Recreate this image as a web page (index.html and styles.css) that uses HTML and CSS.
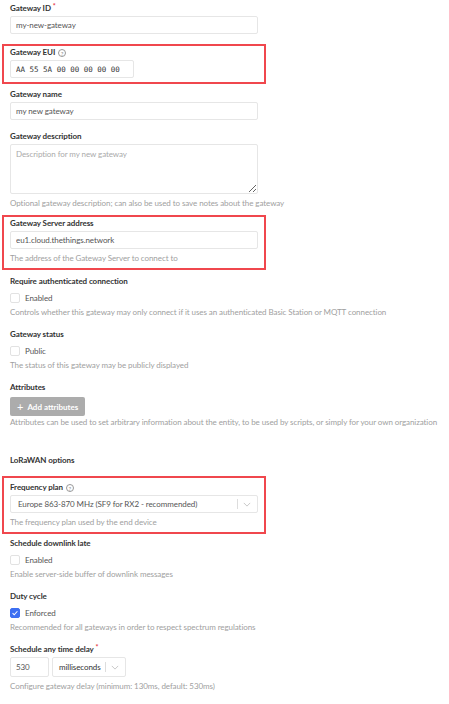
FILE: index.html
```html
<!DOCTYPE html>
<html lang="en">
<head>
    <meta charset="UTF-8">
    <meta name="viewport" content="width=device-width, initial-scale=1.0">
    <title>Add gateway</title>
    <link rel="stylesheet" href="styles.css">
</head>
<body>
    <form class="gateway-form">
        <div class="field">
            <label>Gateway ID <span class="req">*</span></label>
            <input class="text-input" type="text" value="my-new-gateway">
        </div>

        <div class="field highlight hl-top">
            <label>Gateway EUI <span class="help">?</span></label>
            <input class="text-input eui-input" type="text" value="AA 55 5A 00 00 00 00 00">
        </div>

        <div class="field">
            <label>Gateway name</label>
            <input class="text-input" type="text" value="my new gateway">
        </div>

        <div class="field">
            <label>Gateway description</label>
            <textarea class="text-input text-area" placeholder="Description for my new gateway"></textarea>
            <div class="hint">Optional gateway description; can also be used to save notes about the gateway</div>
        </div>

        <div class="field highlight">
            <label>Gateway Server address</label>
            <input class="text-input" type="text" value="eu1.cloud.thethings.network">
            <div class="hint">The address of the Gateway Server to connect to</div>
        </div>

        <div class="field">
            <label>Require authenticated connection</label>
            <div class="check-row"><span class="box"></span>Enabled</div>
            <div class="hint">Controls whether this gateway may only connect if it uses an authenticated Basic Station or MQTT connection</div>
        </div>

        <div class="field">
            <label>Gateway status</label>
            <div class="check-row"><span class="box"></span>Public</div>
            <div class="hint">The status of this gateway may be publicly displayed</div>
        </div>

        <div class="field">
            <label>Attributes</label>
            <button type="button" class="add-btn"><span class="plus">+</span>Add attributes</button>
            <div class="hint">Attributes can be used to set arbitrary information about the entity, to be used by scripts, or simply for your own organization</div>
        </div>

        <h4 class="section-title">LoRaWAN options</h4>

        <div class="field highlight hl-freq">
            <label>Frequency plan <span class="help">?</span></label>
            <div class="select wide">
                <span class="select-value">Europe 863-870 MHz (SF9 for RX2 - recommended)</span>
                <span class="select-sep"></span>
                <svg class="chevron" viewBox="0 0 10 6" width="8" height="5"><path d="M1 1l4 4 4-4" fill="none" stroke="#bbb" stroke-width="1"/></svg>
            </div>
            <div class="hint">The frequency plan used by the end device</div>
        </div>

        <div class="field">
            <label>Schedule downlink late</label>
            <div class="check-row"><span class="box"></span>Enabled</div>
            <div class="hint">Enable server-side buffer of downlink messages</div>
        </div>

        <div class="field">
            <label>Duty cycle</label>
            <div class="check-row">
                <span class="box checked">
                    <svg viewBox="0 0 10 10" width="8" height="8"><path d="M2 5.2l2 2 4-4.4" fill="none" stroke="#fff" stroke-width="1.3"/></svg>
                </span>Enforced
            </div>
            <div class="hint">Recommended for all gateways in order to respect spectrum regulations</div>
        </div>

        <div class="field">
            <label>Schedule any time delay <span class="req">*</span></label>
            <div class="delay-row">
                <input class="text-input delay-input" type="text" value="530">
                <div class="select unit">
                    <span class="select-value dark">milliseconds</span>
                    <span class="select-sep"></span>
                    <svg class="chevron" viewBox="0 0 10 6" width="8" height="5"><path d="M1 1l4 4 4-4" fill="none" stroke="#bbb" stroke-width="1"/></svg>
                </div>
            </div>
            <div class="hint">Configure gateway delay (minimum: 130ms, default: 530ms)</div>
        </div>
    </form>
</body>
</html>
```

FILE: styles.css
```css
/* Global Styles */
body {
    font-family: 'Lato', 'Open Sans', sans-serif;
    font-size: 8px;
    letter-spacing: -0.08px;
    margin: 0;
    padding: 2px 0 0 10px;
    background: #fff;
    color: #333;
}

.gateway-form {
    width: 248px;
}

.field {
    margin-bottom: 10px;
}

.field label {
    display: block;
    font-weight: bold;
    line-height: 12px;
    margin-bottom: 2px;
    color: #333;
}

.req {
    color: #e4343a;
    font-size: 7px;
    vertical-align: top;
    line-height: 9px;
}

.help {
    display: inline-block;
    width: 8px;
    height: 8px;
    border: 1px solid #999;
    border-radius: 50%;
    font-size: 6px;
    line-height: 7px;
    text-align: center;
    color: #888;
    font-weight: normal;
    vertical-align: -1px;
    box-sizing: border-box;
    margin-left: 1px;
    letter-spacing: 0;
}

/* Red annotation boxes */
.highlight {
    border: 2px solid #f0474d;
    margin: -4px -8px 5px -8px;
    padding: 0 8px 4px 6px;
}

.hl-top {
    margin-top: 9px;
    margin-bottom: 4px;
}

.hl-freq {
    padding-top: 3px;
    margin-top: 10px;
    margin-bottom: 3px;
}

.text-input {
    display: block;
    box-sizing: border-box;
    width: 248px;
    height: 18px;
    padding: 0 5px;
    border: 1px solid #e6e6e6;
    border-radius: 2px;
    font-family: inherit;
    font-size: 8px;
    letter-spacing: -0.08px;
    color: #555;
    background: #fff;
    outline: none;
}

.text-input::placeholder {
    color: #aaa;
}

.eui-input {
    width: 124px;
    font-family: 'DejaVu Sans Mono', monospace;
    font-size: 7.5px;
    letter-spacing: 0;
    color: #333;
}

.text-area {
    height: 50px;
    padding: 4px 5px;
    resize: vertical;
}

.hint {
    color: #a0a0a0;
    line-height: 12px;
    margin-top: 3px;
    white-space: nowrap;
}

.check-row {
    display: flex;
    align-items: center;
    height: 12px;
    margin-top: 5px;
    color: #555;
}

.check-row + .hint {
    margin-top: 2px;
}

.box {
    width: 10px;
    height: 10px;
    box-sizing: border-box;
    border: 1px solid #e2e2e2;
    border-radius: 2px;
    margin-right: 5px;
    display: flex;
    align-items: center;
    justify-content: center;
}

.box.checked {
    background: #3d6ff2;
    border-color: #3d6ff2;
}

.add-btn {
    display: flex;
    align-items: center;
    height: 19px;
    padding: 0 7px;
    margin-top: 4px;
    border: none;
    border-radius: 2px;
    background: #acacac;
    color: #fff;
    font-family: inherit;
    font-size: 8px;
    font-weight: bold;
}

.plus {
    font-size: 11px;
    font-weight: normal;
    margin-right: 4px;
    line-height: 10px;
}

.add-btn + .hint {
    margin-top: 0;
}

.section-title {
    font-size: 8px;
    line-height: 12px;
    margin: 26px 0 10px;
    color: #333;
}

.select {
    display: flex;
    align-items: center;
    box-sizing: border-box;
    height: 18px;
    border: 1px solid #e6e6e6;
    border-radius: 2px;
    padding-left: 7px;
}

.select.wide {
    width: 248px;
}

.select-value {
    flex: 1;
    color: #555;
    white-space: nowrap;
}

.select-value.dark {
    color: #333;
}

.select-sep {
    width: 1px;
    height: 10px;
    background: #ddd;
}

.chevron {
    margin: 0 6px 0 5px;
}

.delay-row {
    display: flex;
    gap: 3px;
}

.delay-input {
    width: 39px;
    height: 20px;
}

.select.unit {
    width: 74px;
    height: 20px;
    padding-left: 6px;
}
```
